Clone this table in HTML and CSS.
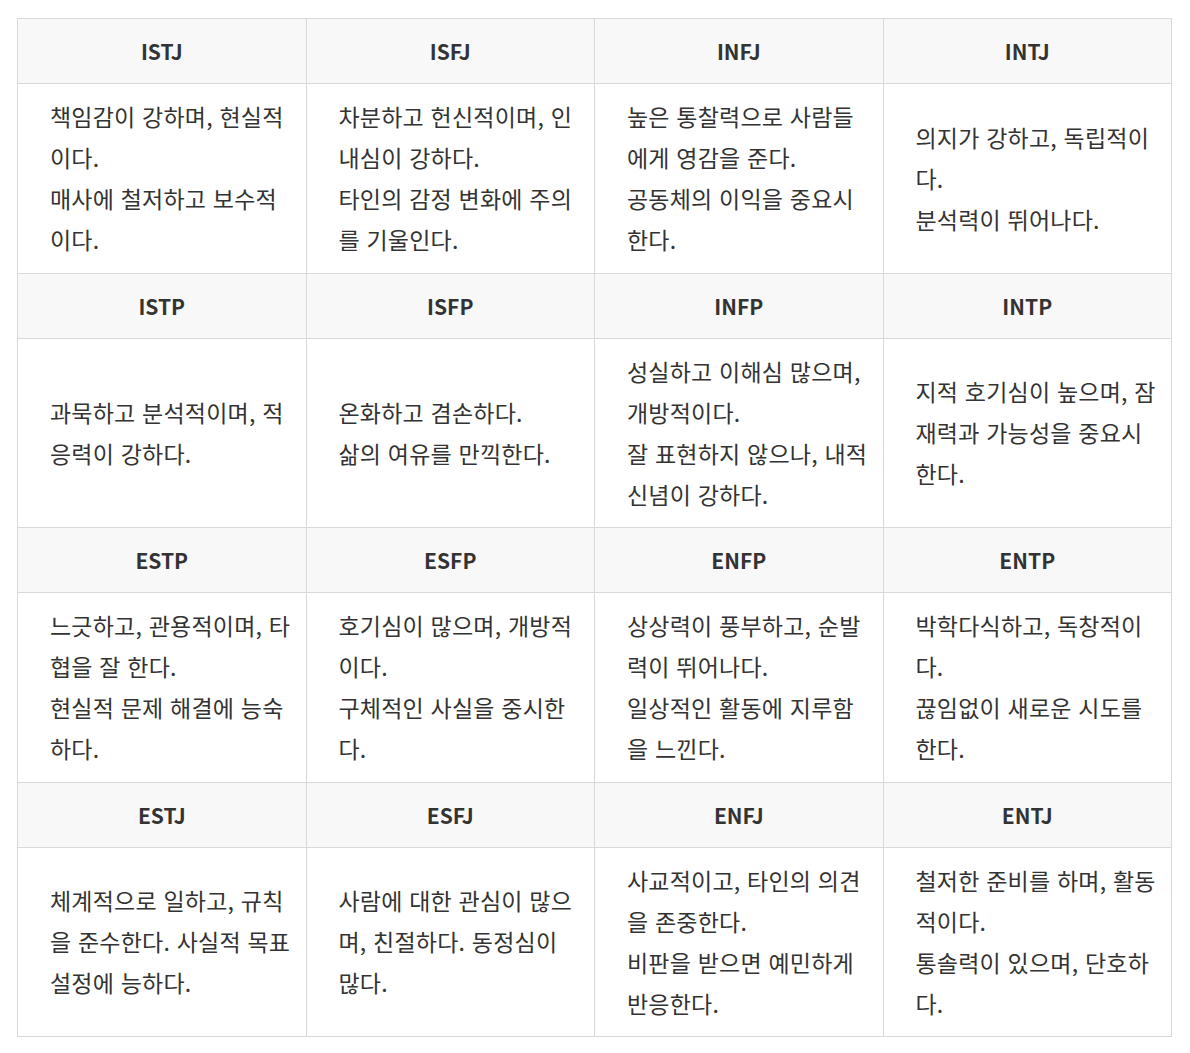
FILE: index.html
```html
<!DOCTYPE html>
<html lang="ko">
<head>
<meta charset="utf-8">
<link rel="stylesheet" href="styles.css">
</head>
<body>
<div class="wrap">
<table class="mbti">
  <tr class="head"><th>ISTJ</th><th>ISFJ</th><th>INFJ</th><th>INTJ</th></tr>
  <tr class="body">
    <td>책임감이 강하며, 현실적<br>이다.<br>매사에 철저하고 보수적<br>이다.</td>
    <td>차분하고 헌신적이며, 인<br>내심이 강하다.<br>타인의 감정 변화에 주의<br>를 기울인다.</td>
    <td>높은 통찰력으로 사람들<br>에게 영감을 준다.<br>공동체의 이익을 중요시<br>한다.</td>
    <td>의지가 강하고, 독립적이<br>다.<br>분석력이 뛰어나다.</td>
  </tr>
  <tr class="head"><th>ISTP</th><th>ISFP</th><th>INFP</th><th>INTP</th></tr>
  <tr class="body">
    <td>과묵하고 분석적이며, 적<br>응력이 강하다.</td>
    <td>온화하고 겸손하다.<br>삶의 여유를 만끽한다.</td>
    <td>성실하고 이해심 많으며,<br>개방적이다.<br>잘 표현하지 않으나, 내적<br>신념이 강하다.</td>
    <td>지적 호기심이 높으며, 잠<br>재력과 가능성을 중요시<br>한다.</td>
  </tr>
  <tr class="head"><th>ESTP</th><th>ESFP</th><th>ENFP</th><th>ENTP</th></tr>
  <tr class="body">
    <td>느긋하고, 관용적이며, 타<br>협을 잘 한다.<br>현실적 문제 해결에 능숙<br>하다.</td>
    <td>호기심이 많으며, 개방적<br>이다.<br>구체적인 사실을 중시한<br>다.</td>
    <td>상상력이 풍부하고, 순발<br>력이 뛰어나다.<br>일상적인 활동에 지루함<br>을 느낀다.</td>
    <td>박학다식하고, 독창적이<br>다.<br>끊임없이 새로운 시도를<br>한다.</td>
  </tr>
  <tr class="head"><th>ESTJ</th><th>ESFJ</th><th>ENFJ</th><th>ENTJ</th></tr>
  <tr class="body">
    <td>체계적으로 일하고, 규칙<br>을 준수한다. 사실적 목표<br>설정에 능하다.</td>
    <td>사람에 대한 관심이 많으<br>며, 친절하다. 동정심이<br>많다.</td>
    <td>사교적이고, 타인의 의견<br>을 존중한다.<br>비판을 받으면 예민하게<br>반응한다.</td>
    <td>철저한 준비를 하며, 활동<br>적이다.<br>통솔력이 있으며, 단호하<br>다.</td>
  </tr>
</table>
</div>
</body>
</html>
```

FILE: styles.css
```css
html, body {
  margin: 0;
  padding: 0;
  background: #ffffff;
}
.wrap {
  padding: 18px 17px;
}
.mbti {
  width: 1155px;
  border-collapse: collapse;
  table-layout: fixed;
  font-family: "Noto Sans CJK KR", "Noto Sans", sans-serif;
  color: #333333;
}
.mbti th, .mbti td {
  border: 1px solid #d9d9d9;
}
.mbti th {
  height: 64px;
  padding: 0;
  background: #f8f8f8;
  font-size: 21px;
  font-weight: 700;
  text-align: center;
  vertical-align: middle;
  color: #333333;
}
.mbti td {
  height: 188.5px;
  padding: 0 6px 0 32px;
  font-size: 23px;
  font-weight: 400;
  line-height: 41px;
  letter-spacing: 0.2px;
  vertical-align: middle;
  white-space: nowrap;
  text-align: left;
}
```
